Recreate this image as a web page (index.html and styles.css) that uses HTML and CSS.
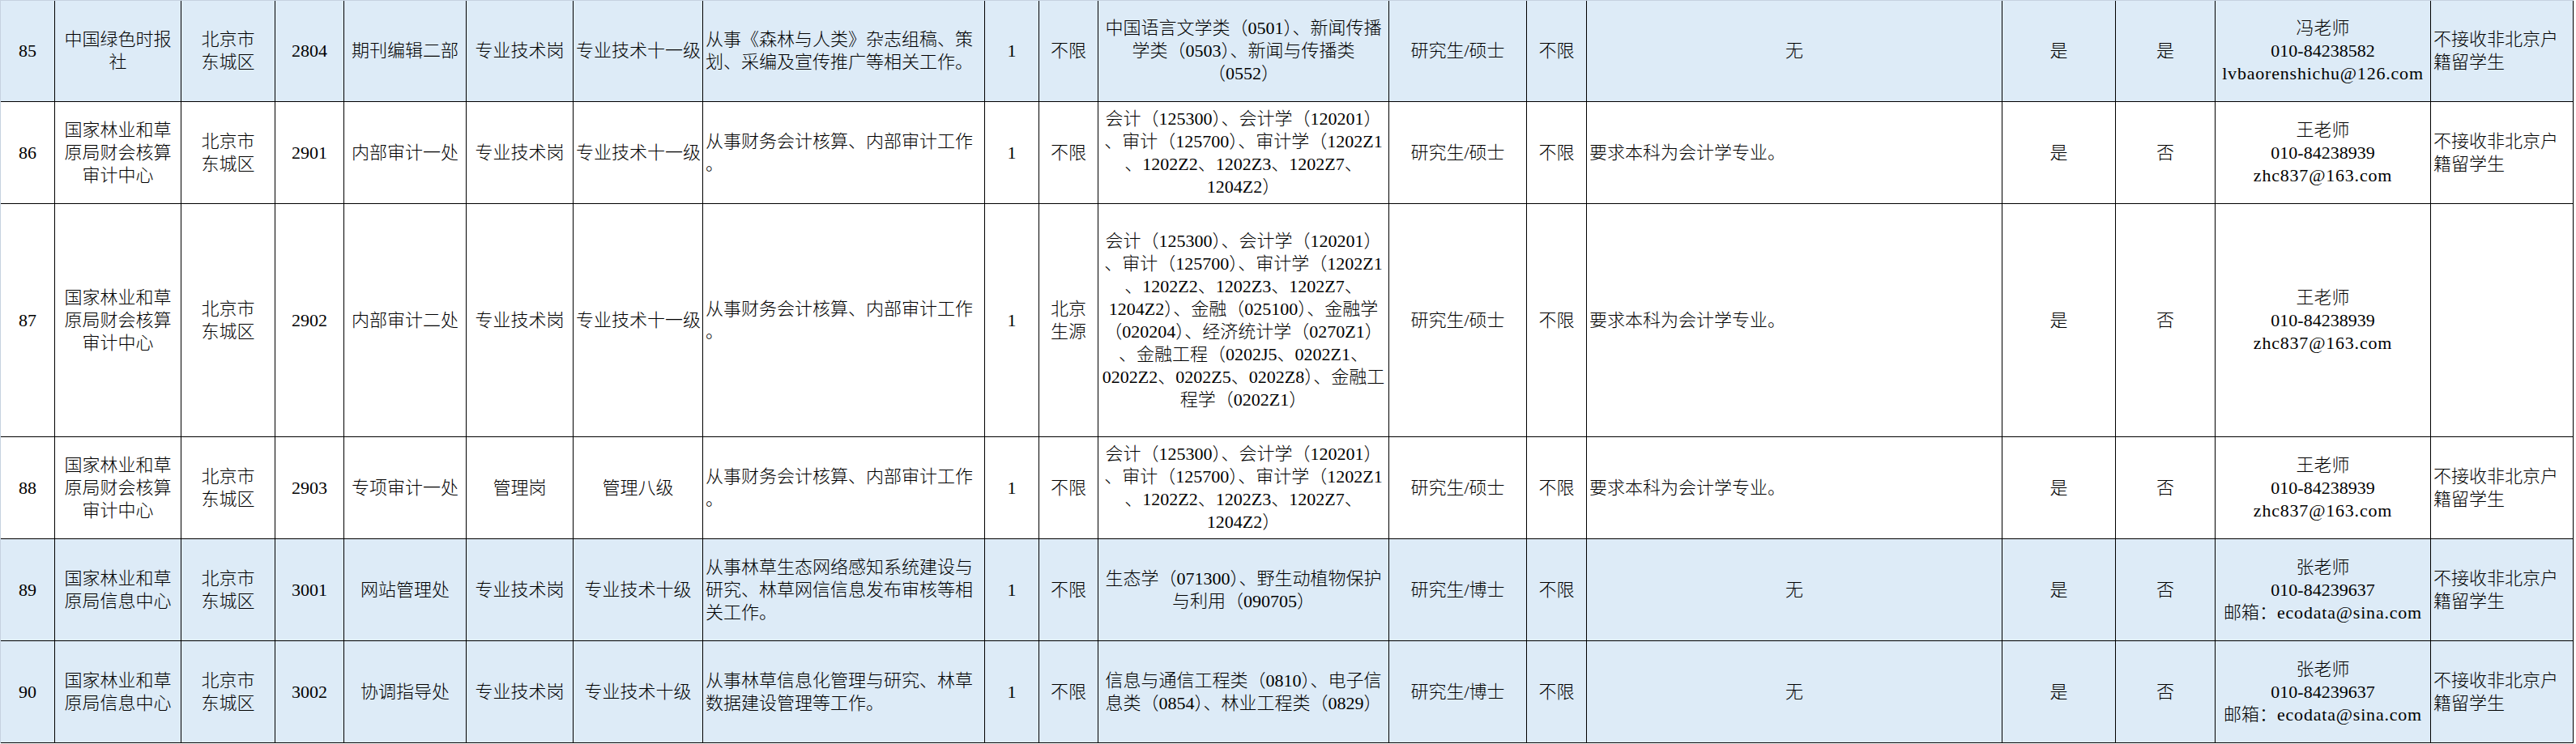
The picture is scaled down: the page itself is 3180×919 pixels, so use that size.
FILE: index.html
```html
<!DOCTYPE html>
<html lang="zh-CN">
<head>
<meta charset="utf-8">
<title>岗位信息表</title>
<link rel="stylesheet" href="styles.css">
</head>
<body>
<table class="grid">
  <colgroup>
    <col class="w67"><col class="w156"><col class="w116"><col class="w85"><col class="w151"><col class="w132"><col class="w160"><col class="w348"><col class="w67"><col class="w73"><col class="w359"><col class="w170"><col class="w74"><col class="w513"><col class="w140"><col class="w123"><col class="w266"><col class="w176">
  </colgroup>
  <tbody>
    <tr class="row hl first">
      <td>85</td>
      <td>中国绿色时报<br>社</td>
      <td>北京市<br>东城区</td>
      <td>2804</td>
      <td>期刊编辑二部</td>
      <td>专业技术岗</td>
      <td>专业技术十一级</td>
      <td class="l">从事《森林与人类》杂志组稿、策<br>划、采编及宣传推广等相关工作。</td>
      <td>1</td>
      <td>不限</td>
      <td>中国语言文学类（0501）、新闻传播<br>学类（0503）、新闻与传播类<br>（0552）</td>
      <td>研究生/硕士</td>
      <td>不限</td>
      <td>无</td>
      <td>是</td>
      <td>是</td>
      <td>冯老师<br>010-84238582<br><span class="mail">lvbaorenshichu@126.com</span></td>
      <td class="l">不接收非北京户<br>籍留学生</td>
    </tr>
    <tr class="row">
      <td>86</td>
      <td>国家林业和草<br>原局财会核算<br>审计中心</td>
      <td>北京市<br>东城区</td>
      <td>2901</td>
      <td>内部审计一处</td>
      <td>专业技术岗</td>
      <td>专业技术十一级</td>
      <td class="l">从事财务会计核算、内部审计工作<br>。</td>
      <td>1</td>
      <td>不限</td>
      <td>会计（125300）、会计学（120201）<br>、审计（125700）、审计学（1202Z1<br>、1202Z2、1202Z3、1202Z7、<br>1204Z2）</td>
      <td>研究生/硕士</td>
      <td>不限</td>
      <td class="l">要求本科为会计学专业。</td>
      <td>是</td>
      <td>否</td>
      <td>王老师<br>010-84238939<br><span class="mail">zhc837@163.com</span></td>
      <td class="l">不接收非北京户<br>籍留学生</td>
    </tr>
    <tr class="row tall">
      <td>87</td>
      <td>国家林业和草<br>原局财会核算<br>审计中心</td>
      <td>北京市<br>东城区</td>
      <td>2902</td>
      <td>内部审计二处</td>
      <td>专业技术岗</td>
      <td>专业技术十一级</td>
      <td class="l">从事财务会计核算、内部审计工作<br>。</td>
      <td>1</td>
      <td>北京<br>生源</td>
      <td>会计（125300）、会计学（120201）<br>、审计（125700）、审计学（1202Z1<br>、1202Z2、1202Z3、1202Z7、<br>1204Z2）、金融（025100）、金融学<br>（020204）、经济统计学（0270Z1）<br>、金融工程（0202J5、0202Z1、<br>0202Z2、0202Z5、0202Z8）、金融工<br>程学（0202Z1）</td>
      <td>研究生/硕士</td>
      <td>不限</td>
      <td class="l">要求本科为会计学专业。</td>
      <td>是</td>
      <td>否</td>
      <td>王老师<br>010-84238939<br><span class="mail">zhc837@163.com</span></td>
      <td class="l"></td>
    </tr>
    <tr class="row">
      <td>88</td>
      <td>国家林业和草<br>原局财会核算<br>审计中心</td>
      <td>北京市<br>东城区</td>
      <td>2903</td>
      <td>专项审计一处</td>
      <td>管理岗</td>
      <td>管理八级</td>
      <td class="l">从事财务会计核算、内部审计工作<br>。</td>
      <td>1</td>
      <td>不限</td>
      <td>会计（125300）、会计学（120201）<br>、审计（125700）、审计学（1202Z1<br>、1202Z2、1202Z3、1202Z7、<br>1204Z2）</td>
      <td>研究生/硕士</td>
      <td>不限</td>
      <td class="l">要求本科为会计学专业。</td>
      <td>是</td>
      <td>否</td>
      <td>王老师<br>010-84238939<br><span class="mail">zhc837@163.com</span></td>
      <td class="l">不接收非北京户<br>籍留学生</td>
    </tr>
    <tr class="row hl">
      <td>89</td>
      <td>国家林业和草<br>原局信息中心</td>
      <td>北京市<br>东城区</td>
      <td>3001</td>
      <td>网站管理处</td>
      <td>专业技术岗</td>
      <td>专业技术十级</td>
      <td class="l">从事林草生态网络感知系统建设与<br>研究、林草网信信息发布审核等相<br>关工作。</td>
      <td>1</td>
      <td>不限</td>
      <td>生态学（071300）、野生动植物保护<br>与利用（090705）</td>
      <td>研究生/博士</td>
      <td>不限</td>
      <td>无</td>
      <td>是</td>
      <td>否</td>
      <td>张老师<br>010-84239637<br>邮箱：<span class="mail">ecodata@sina.com</span></td>
      <td class="l">不接收非北京户<br>籍留学生</td>
    </tr>
    <tr class="row hl">
      <td>90</td>
      <td>国家林业和草<br>原局信息中心</td>
      <td>北京市<br>东城区</td>
      <td>3002</td>
      <td>协调指导处</td>
      <td>专业技术岗</td>
      <td>专业技术十级</td>
      <td class="l">从事林草信息化管理与研究、林草<br>数据建设管理等工作。</td>
      <td>1</td>
      <td>不限</td>
      <td>信息与通信工程类（0810）、电子信<br>息类（0854）、林业工程类（0829）</td>
      <td>研究生/博士</td>
      <td>不限</td>
      <td>无</td>
      <td>是</td>
      <td>否</td>
      <td>张老师<br>010-84239637<br>邮箱：<span class="mail">ecodata@sina.com</span></td>
      <td class="l">不接收非北京户<br>籍留学生</td>
    </tr>
  </tbody>
</table>
</body>
</html>
```

FILE: styles.css
```css
html, body {
  margin: 0;
  padding: 0;
  background: #ffffff;
}

.grid {
  table-layout: fixed;
  width: 3177px;
  border-collapse: separate;
  border-spacing: 0;
  border-left: 1px solid #c6d2e0;
  border-top: 1px solid #c6d2e0;
  font-family: "Liberation Serif", "Noto Sans CJK SC", serif;
  font-size: 22px;
  line-height: 28px;
  color: #000;
}

.grid td {
  box-sizing: border-box;
  border-right: 1px solid #000;
  border-bottom: 1px solid #000;
  padding: 0 3px;
  text-align: center;
  vertical-align: middle;
  white-space: nowrap;
  overflow: hidden;
  font-weight: 300;
}

.grid td.l {
  text-align: left;
}

.mail {
  letter-spacing: 0.8px;
}

.row { height: 126px; }
.row.first { height: 125px; }
.row.tall { height: 288px; }

.row.hl td { background: #ddebf7; }

.w67 { width: 67px; }
.w156 { width: 156px; }
.w116 { width: 116px; }
.w85 { width: 85px; }
.w151 { width: 151px; }
.w132 { width: 132px; }
.w160 { width: 160px; }
.w348 { width: 348px; }
.w73 { width: 73px; }
.w359 { width: 359px; }
.w170 { width: 170px; }
.w74 { width: 74px; }
.w513 { width: 513px; }
.w140 { width: 140px; }
.w123 { width: 123px; }
.w266 { width: 266px; }
.w176 { width: 176px; }
```
